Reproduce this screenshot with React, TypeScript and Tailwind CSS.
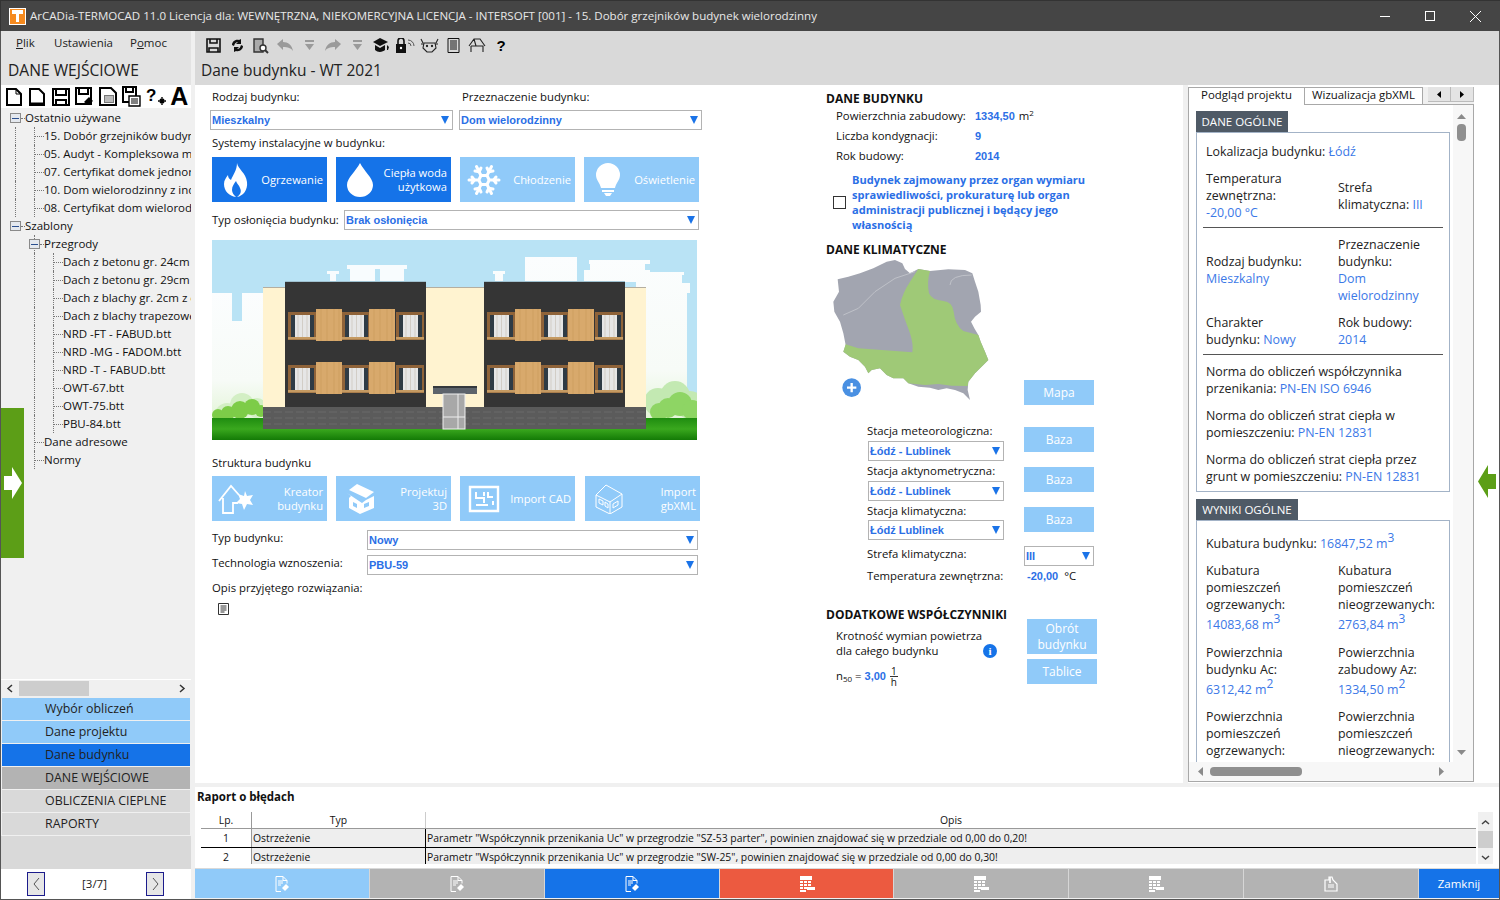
import type { ReactNode } from 'react'
import { Snowflake } from 'lucide-react'

const blue = 'text-[#2b6fe6]'

function Tri({ className = 'fill-[#1a73e8]' }: { className?: string }) {
  return (
    <svg width="8" height="8" viewBox="0 0 8 8" className={className}>
      <path d="M0 0h8L4 8z" />
    </svg>
  )
}

function Combo({ value, className }: { value: string; className: string }) {
  return (
    <div className={`h-5 shrink-0 border border-[#b3b3b3] bg-white flex items-center justify-between pl-px pr-[3px] ${className}`}>
      <span className={`text-[11px] font-bold font-['Liberation_Sans',sans-serif] ${blue}`}>{value}</span>
      <Tri />
    </div>
  )
}

function LightBtn({ children, className }: { children: ReactNode; className: string }) {
  return (
    <div className={`bg-[#90caf9] text-white text-[12px] leading-[16px] flex items-center justify-center text-center shrink-0 ${className}`}>
      {children}
    </div>
  )
}

function SystemBtn({ icon, label, on, w = 'w-[115px]' }: { icon: ReactNode; label: ReactNode; on?: boolean; w?: string }) {
  return (
    <div className={`h-[45px] ${w} shrink-0 flex items-center justify-between pl-[6px] pr-[4px] text-white text-[11.2px] leading-[14px] text-right ${on ? 'bg-[#1573e8]' : 'bg-[#90caf9]'}`}>
      <span className="w-[36px] h-[36px] flex items-center justify-center">{icon}</span>
      <span>{label}</span>
    </div>
  )
}

/* ---- toolbar drawings ---- */
const doc = 'fill-none stroke-black'

function LeftIcons() {
  const items = [
    <svg key="a" width="18" height="20" viewBox="0 0 18 20" className={doc} strokeWidth="2"><path d="M2 2h9l5 5v11H2z" /><path d="M11 2v5h5" strokeWidth="1" /></svg>,
    <svg key="b" width="18" height="20" viewBox="0 0 18 20" className={doc} strokeWidth="2"><path d="M2 2h9l5 5v11H2z" /><path d="M1 17h16" strokeWidth="3" /></svg>,
    <svg key="c" width="18" height="18" viewBox="0 0 18 18" className={doc} strokeWidth="2"><path d="M1 1h16v16H1z" /><path d="M4 1v6h10V1M4 17v-5h10v5" /></svg>,
    <svg key="d" width="19" height="19" viewBox="0 0 19 19" className={doc} strokeWidth="2"><path d="M1 1h15v16H1z" /><path d="M4 1v6h9V1" /><path d="M9 15l5-5 4 4-5 4z" fill="black" stroke="none" /></svg>,
    <svg key="e" width="19" height="19" viewBox="0 0 19 19"><path d="M1 1h11l5 5v12H1z" className={doc} strokeWidth="2" /><path d="M5 8h10v8H5z" fill="#777" /><path d="M6 10h8M6 12h8M6 14h8" stroke="#fff" /></svg>,
    <svg key="f" width="19" height="21" viewBox="0 0 19 21" className={doc} strokeWidth="2"><path d="M1 1h13v15H1z" /><path d="M4 1v5h7V1" /><path d="M7 10h11v10H7z" fill="#fff" strokeWidth="1.4" /><path d="M9 13h7M9 15h7M9 17h7" strokeWidth="1" /></svg>,
    <svg key="g" width="20" height="20" viewBox="0 0 20 20"><text x="0" y="14" fontSize="17" fontWeight="900" fontFamily="Liberation Sans">?</text><path d="M14 12l4 4M18 12l-4 4M16 10v8M12 14h8" stroke="#000" strokeWidth="1.4" /></svg>,
    <span key="h" className="text-[25px] leading-none font-bold font-['Liberation_Sans',sans-serif] text-black">A</span>,
  ]
  return (
    <div className="h-[23px] bg-white flex items-center pl-[1px]">
      {items.map((it, i) => (
        <span key={i} className="w-6 h-[23px] flex items-center justify-center">{it}</span>
      ))}
    </div>
  )
}

function MainIcons() {
  const gray = '#9a9a9a'
  const items = [
    <svg key="save" width="15" height="15" viewBox="0 0 15 15" fill="none" stroke="#111" strokeWidth="1.6"><path d="M1 1h13v13H1z" /><path d="M4 1v4h7V1M3 14v-4h9v4" /></svg>,
    <svg key="sync" width="15" height="15" viewBox="0 0 15 15" fill="#111"><path d="M2 7c0-3 3-6 7-5l2-1v5H6l2-2C6 4 5 5 4 8zM13 8c0 3-3 6-7 5l-2 1V9h5l-2 2c2 0 3-1 4-4z" /></svg>,
    <svg key="prev" width="16" height="16" viewBox="0 0 16 16" fill="none" stroke="#333" strokeWidth="1.4"><path d="M1 1h9v13H1z" fill="#aaa" /><circle cx="10" cy="10" r="3" fill="#fff" /><path d="M12 12l3 3" strokeWidth="2" /></svg>,
    <svg key="undo" width="16" height="13" viewBox="0 0 16 13" fill={gray}><path d="M0 5l6-5v3c5 0 9 3 10 9-2-3-5-4-10-4v3z" /></svg>,
    <svg key="d1" width="11" height="11" viewBox="0 0 11 11" fill={gray}><path d="M1 0h9v2H1zM1 4h9L5.5 10z" /></svg>,
    <svg key="redo" width="16" height="13" viewBox="0 0 16 13" fill={gray}><path d="M16 5l-6-5v3C5 3 1 6 0 12c2-3 5-4 10-4v3z" /></svg>,
    <svg key="d2" width="11" height="11" viewBox="0 0 11 11" fill={gray}><path d="M1 0h9v2H1zM1 4h9L5.5 10z" /></svg>,
    <svg key="hat" width="16" height="15" viewBox="0 0 16 15" fill="#111"><path d="M7 0l8 4-8 4-7-4zM2 7l5 3 5-3v5c-2 2-7 3-10 0zM14 7l2 2-1 3h-1z" /></svg>,
    <svg key="lock" width="20" height="15" viewBox="0 0 20 15"><path d="M1 6h10v9H1z" fill="#111" /><path d="M3 6V3a3 3 0 0 1 6 0v3" fill="none" stroke="#111" strokeWidth="1.6" /><path d="M13 5a3 3 0 0 1 3 3M13 2a6 6 0 0 1 6 6" fill="none" stroke="#555" /><circle cx="6" cy="10" r="1.2" fill="#fff" /></svg>,
    <svg key="cow" width="19" height="15" viewBox="0 0 19 15" fill="none" stroke="#222" strokeWidth="1.1"><path d="M4 5h11l1 5-4 4H7l-4-4zM3 5L1 1M16 5l2-4M4 6H1M15 6h3" /><circle cx="7" cy="8" r=".6" fill="#222" /><circle cx="12" cy="8" r=".6" fill="#222" /></svg>,
    <svg key="list" width="13" height="15" viewBox="0 0 13 15" fill="none" stroke="#111"><path d="M1 .5h11v14H1z" /><path d="M3 3h7M3 5h7M3 7h7M3 9h7M3 11h7" /></svg>,
    <svg key="house" width="18" height="15" viewBox="0 0 18 15" fill="none" stroke="#222" strokeWidth="1.1"><path d="M1 8l5-7h6l5 7M3 8h12v6M3 8v6M6 1l2 7" /></svg>,
    <span key="q" className="text-[15px] font-bold font-['Liberation_Sans',sans-serif] text-black leading-none">?</span>,
  ]
  return (
    <div className="h-[28px] flex items-center pl-[6px] pt-[1px]">
      {items.map((it, i) => (
        <span key={i} className="w-6 h-6 flex items-center justify-center">{it}</span>
      ))}
    </div>
  )
}

/* ---- tree ---- */
type TreeRow = { t: string; x: string; guides: number[]; stub?: number; box?: number }

const tree: TreeRow[] = [
  { t: 'Ostatnio używane', x: 'pl-[24px]', guides: [], box: 9 },
  { t: '15. Dobór grzejników budynek wielorodzinny', x: 'pl-[43px]', guides: [14, 33], stub: 33 },
  { t: '05. Audyt - Kompleksowa modernizacja', x: 'pl-[43px]', guides: [14, 33], stub: 33 },
  { t: '07. Certyfikat domek jednorodzinny', x: 'pl-[43px]', guides: [14, 33], stub: 33 },
  { t: '10. Dom wielorodzinny z indywidualnym', x: 'pl-[43px]', guides: [14, 33], stub: 33 },
  { t: '08. Certyfikat dom wielorodzinny', x: 'pl-[43px]', guides: [14, 33], stub: 33 },
  { t: 'Szablony', x: 'pl-[24px]', guides: [], box: 9 },
  { t: 'Przegrody', x: 'pl-[43px]', guides: [33], box: 28 },
  { t: 'Dach z betonu gr. 24cm', x: 'pl-[62px]', guides: [33, 52], stub: 52 },
  { t: 'Dach z betonu gr. 29cm', x: 'pl-[62px]', guides: [33, 52], stub: 52 },
  { t: 'Dach z blachy gr. 2cm z ociepleniem', x: 'pl-[62px]', guides: [33, 52], stub: 52 },
  { t: 'Dach z blachy trapezowej', x: 'pl-[62px]', guides: [33, 52], stub: 52 },
  { t: 'NRD -FT - FABUD.btt', x: 'pl-[62px]', guides: [33, 52], stub: 52 },
  { t: 'NRD -MG - FADOM.btt', x: 'pl-[62px]', guides: [33, 52], stub: 52 },
  { t: 'NRD -T - FABUD.btt', x: 'pl-[62px]', guides: [33, 52], stub: 52 },
  { t: 'OWT-67.btt', x: 'pl-[62px]', guides: [33, 52], stub: 52 },
  { t: 'OWT-75.btt', x: 'pl-[62px]', guides: [33, 52], stub: 52 },
  { t: 'PBU-84.btt', x: 'pl-[62px]', guides: [33, 52], stub: 52 },
  { t: 'Dane adresowe', x: 'pl-[43px]', guides: [33], stub: 33 },
  { t: 'Normy', x: 'pl-[43px]', guides: [33], stub: 33 },
]

function Tree() {
  return (
    <div className="flex-1 min-h-0 overflow-hidden bg-[#f0f0f0] pt-px relative">
      {tree.map((r, i) => (
        <div key={i} className={`relative h-[18px] leading-[18px] text-[11.5px] whitespace-nowrap text-[#111] ${r.x}`}>
          {r.guides.map((g) => (
            <span key={g} className="absolute top-0 h-full border-l border-dotted border-[#777]" style={{ left: g }} />
          ))}
          {r.stub !== undefined && (
            <span className="absolute top-[9px] w-[10px] border-t border-dotted border-[#777]" style={{ left: r.stub }} />
          )}
          {r.box !== undefined && (
            <>
              <span className="absolute top-[4px] w-[11px] h-[10px] border border-[#8a8a8a] bg-[#e4e8ee] flex items-center justify-center" style={{ left: r.box }}>
                <span className="w-[7px] h-px bg-[#2a4f8f]" />
              </span>
              <span className="absolute top-[9px] w-[4px] border-t border-dotted border-[#777]" style={{ left: r.box + 11 }} />
            </>
          )}
          {r.t}
        </div>
      ))}
      <div className="absolute left-0 top-[300px] w-[23px] h-[150px] bg-[#5c9e17] flex items-center pl-[2px]">
        <svg width="20" height="32" viewBox="0 0 20 32" fill="#fff"><path d="M1 9h8V0l10 16L9 32v-9H1z" /></svg>
      </div>
    </div>
  )
}

function NavItem({ label, bg }: { label: string; bg: string }) {
  return <div className={`h-[22px] mb-px mx-[1px] pl-[43px] text-[12.4px] leading-[22px] text-[#222] ${bg}`}>{label}</div>
}

function Pager({ dir }: { dir: 'l' | 'r' }) {
  return (
    <div className="w-[18px] h-6 border border-[#1c1c8c] bg-[#e6e6e6] flex items-center justify-center">
      <svg width="7" height="14" viewBox="0 0 7 14" fill="none" stroke="#555">
        <path d={dir === 'l' ? 'M6 1L1 7l5 6' : 'M1 1l5 6-5 6'} />
      </svg>
    </div>
  )
}

function LeftPanel() {
  return (
    <div className="w-[190px] shrink-0 flex flex-col">
      <div className="h-[54px] bg-[#e3e3e3] shrink-0">
        <div className="h-[21px] flex items-end pl-[15px] text-[11.5px] text-[#222] leading-[18px]">
          <span className="w-[38px]"><span className="underline">P</span>lik</span>
          <span className="w-[76px]">Ustawienia</span>
          <span>P<span className="underline">o</span>moc</span>
        </div>
        <div className="pl-[7px] mt-[7px] text-[15.6px] leading-[22px] text-[#222]">DANE WEJŚCIOWE</div>
      </div>
      <LeftIcons />
      <Tree />
      <div className="h-[18px] bg-[#f0f0f0] border-t border-white flex items-center pl-[5px] pr-[5px] shrink-0">
        <svg width="7" height="9" viewBox="0 0 7 9" fill="none" stroke="#333" strokeWidth="1.5"><path d="M6 1L2 4.5 6 8" /></svg>
        <div className="w-[70px] h-[15px] bg-[#cdcdcd] ml-[6px]" />
        <div className="flex-1" />
        <svg width="7" height="9" viewBox="0 0 7 9" fill="none" stroke="#333" strokeWidth="1.5"><path d="M1 1l4 3.5L1 8" /></svg>
      </div>
      <div className="bg-[#f0f0f0] pt-px shrink-0">
        <NavItem label="Wybór obliczeń" bg="bg-[#90caf9]" />
        <NavItem label="Dane projektu" bg="bg-[#90caf9]" />
        <NavItem label="Dane budynku" bg="bg-[#1573e8]" />
        <NavItem label="DANE WEJŚCIOWE" bg="bg-[#b3b3b3]" />
        <NavItem label="OBLICZENIA CIEPLNE" bg="bg-[#d9d9d9]" />
        <NavItem label="RAPORTY" bg="bg-[#d9d9d9]" />
      </div>
      <div className="h-[33px] bg-[#d9d9d9] shrink-0" />
      <div className="h-[30px] bg-white flex items-center pl-[26px] shrink-0">
        <Pager dir="l" />
        <span className="w-[101px] pr-[2px] text-center text-[11.5px] text-[#222]">[3/7]</span>
        <Pager dir="r" />
      </div>
    </div>
  )
}

/* ---- picture of the building ---- */
function Win({ x, y }: { x: number; y: number }) {
  return (
    <g>
      <rect x={x} y={y} width="28" height="28" fill="#8f6339" />
      <rect x={x + 3} y={y + 3} width="23" height="23" fill="#2f3b45" />
      <rect x={x + 7} y={y + 3} width="15" height="23" fill="#e6e6e6" />
      <path d={`M${x + 14.5} ${y + 3}v23M${x + 10} ${y + 3}v23M${x + 19} ${y + 3}v23`} stroke="#c9c2b8" strokeWidth="0.7" />
      <rect x={x} y={y + 25} width="28" height="2.500" fill="#c59a62" />
    </g>
  )
}

function Wood({ x, y }: { x: number; y: number }) {
  return (
    <g>
      <rect x={x} y={y} width="26" height="32" fill="#d8a96c" />
      <path d={`M${x + 5} ${y}v32M${x + 11} ${y}v32M${x + 18} ${y}v32M${x + 23} ${y}v32`} stroke="#cb9a5c" strokeWidth="0.6" />
    </g>
  )
}

function Bush({ fill, cs }: { fill: string; cs: number[][] }) {
  return (
    <g fill={fill}>
      {cs.map(([x, y, r], i) => <circle key={i} cx={x} cy={y} r={r} />)}
    </g>
  )
}

function Building() {
  const blocks = [0, 199]
  return (
    <svg width="485" height="200" viewBox="0 0 485 200" className="block">
      <defs>
        <linearGradient id="grass" x1="0" y1="0" x2="0" y2="1">
          <stop offset="0" stopColor="#1f8c10" />
          <stop offset="0.5" stopColor="#3aa81e" />
          <stop offset="1" stopColor="#137a06" />
        </linearGradient>
        <linearGradient id="haze" x1="0" y1="0" x2="0" y2="1">
          <stop offset="0" stopColor="#fbfdfe" />
          <stop offset="0.7" stopColor="#f7fbf7" />
          <stop offset="1" stopColor="#e4f5d8" />
        </linearGradient>
      </defs>
      <rect width="485" height="200" fill="#b9e3f5" />
      <path d="M0 53h20v28h10V53h22v125H0z" fill="url(#haze)" />
      <path d="M118 42v-8h-3v-3h12v3h-3v8zM138 42v-13h-3v-4h30v4h-2v13zM168 42v-13h-3v-4h30v4h-3v13z" fill="#f8fcfe" />
      <path d="M283 42v-8h-2v-3h12v3h-2v8zM313 42V17h52v25zM372 42V30h6v-6h-1v-4h61v4h-5v6h5v2h34v3h-2v8h8v10h-3v126h-51V42z" fill="url(#haze)" />
      <Bush fill="#c3e9b2" cs={[[446, 162, 14], [463, 156, 15], [478, 165, 14]]} />
      <Bush fill="#8ed564" cs={[[447, 172, 9], [456, 168, 10], [468, 164, 12], [480, 170, 10]]} />
      <Bush fill="#d3efc4" cs={[[15, 175, 12], [30, 165, 12], [45, 168, 10]]} />
      <Bush fill="#7dcc48" cs={[[6, 175, 6], [16, 173, 7], [28, 170, 9], [40, 167, 8], [49, 171, 6]]} />
      <rect y="178" width="485" height="22" fill="url(#grass)" />
      <rect x="51" y="48" width="383" height="119" fill="#fff3d0" />
      <rect x="51" y="47" width="383" height="1" fill="#b4aea0" />
      {blocks.map((o) => (
        <g key={o}>
          <rect x={73 + o} y="41" width="141" height="126" fill="#353535" />
          <rect x={73 + o} y="41" width="141" height="1" fill="#9fc1d0" />
          {[72, 125].map((y) => (
            <g key={y}>
              <Win x={76 + o} y={y} />
              <Win x={130 + o} y={y} />
              <Win x={184 + o} y={y} />
              <Wood x={104 + o} y={y - 3} />
              <Wood x={157 + o} y={y - 3} />
            </g>
          ))}
        </g>
      ))}
      <rect x="51" y="167" width="383" height="22" fill="#5b5b5b" />
      <path d="M51 172h383M51 178h383M51 184h383" stroke="#6a6a6a" strokeDasharray="8 3" />
      <rect x="221" y="146" width="44" height="8" fill="#5d636b" />
      <rect x="221" y="146" width="44" height="2" fill="#34383d" />
      <rect x="231" y="154" width="22" height="35" fill="#a8a8a8" stroke="#f0f0f0" />
      <path d="M246 154v35M231 177h22" stroke="#eee" />
    </svg>
  )
}

/* ---- middle column map ---- */
function PolandMap() {
  return (
    <svg width="170" height="147" viewBox="45 519 510 441" className="block ml-[4px] shrink-0">
      <path d="M68 583L100 575 135 565 175 550 215 530 240 525 262 535 270 552 285 565 310 552 345 558 400 553 450 555 472 565 480 590 490 620 497 660 498 680 480 695 468 710 478 730 490 750 497 770 510 800 520 825 505 840 480 865 460 890 458 915 465 945 445 925 420 915 395 910 370 915 345 908 310 905 280 895 265 880 235 880 215 870 195 850 170 855 160 865 150 845 130 825 105 815 85 800 92 780 85 745 75 710 58 680 55 650 72 620Z" fill="#a2a5b0" />
      <path d="M310 552L345 558Q335 590 342 625 350 645 385 648 412 650 416 680 420 720 445 738L490 750 497 770 510 800 520 825 505 840 480 865 460 890 458 903 410 902 370 897 330 900 280 895 265 880 235 880 215 870 195 850 170 855 160 865 150 845 130 825 105 815 85 800 92 778 130 790 200 795 292 802Q296 780 285 745 268 700 255 660 262 625 285 590Z" fill="#9fc977" />
      <path d="M85 690L130 670 180 620 240 580 300 560M405 600Q405 570 470 570" fill="none" stroke="#c4c6cc" strokeWidth="2.5" />
      <circle cx="110" cy="908" r="28" fill="#4a90e2" />
      <path d="M110 894v28M96 908h28" stroke="#fff" strokeWidth="7" />
    </svg>
  )
}

function Station({ label, value, mt, gap }: { label: string; value: string; mt: string; gap: string }) {
  return (
    <div className={`flex ${mt}`}>
      <div className="ml-[41px] w-[157px] shrink-0">
        <div className="h-4 leading-4">{label}</div>
        <Combo value={value} className={`ml-px w-[136px] ${gap}`} />
      </div>
      <LightBtn className="w-[70px] h-[25px] mt-[4px]">Baza</LightBtn>
    </div>
  )
}

function Pair({ a, b, center }: { a: ReactNode; b: ReactNode; center?: boolean }) {
  return (
    <div className={`grid grid-cols-[132px_1fr] ${center ? 'items-center' : ''}`}>
      <div>{a}</div>
      <div>{b}</div>
    </div>
  )
}

const V = ({ children }: { children: ReactNode }) => <span className="text-[#3b78e7]">{children}</span>
const Up = ({ children }: { children: ReactNode }) => <sup className="text-[12px]">{children}</sup>

function TabPanel() {
  return (
    <div className="w-[286px] shrink-0 bg-white flex flex-col pt-[2px]">
      <div className="h-[17px] flex items-start text-[11.4px] relative shrink-0 bg-[#f0f0f0]">
        <div className="w-[117px] h-[18px] border-l border-t border-r border-[#a8a8a8] bg-white text-center leading-[14px] relative z-10">Podgląd projektu</div>
        <div className="w-[118px] h-[17px] border-t border-r border-[#a8a8a8] bg-white text-center leading-[14px] whitespace-nowrap">Wizualizacja gbXML</div>
        <div className="ml-[5px] w-[46px] h-[15px] bg-[#e4e4e4] border-r border-b border-[#bbb] flex text-black">
          <span className="flex-1 flex items-center justify-center border-r border-[#bbb]"><svg width="4" height="7" viewBox="0 0 4 7"><path d="M4 0v7L0 3.5z" /></svg></span>
          <span className="flex-1 flex items-center justify-center"><svg width="4" height="7" viewBox="0 0 4 7"><path d="M0 0v7l4-3.5z" /></svg></span>
        </div>
      </div>
      <div className="h-[678px] border border-[#a8a8a8] flex flex-col overflow-hidden">
        <div className="flex-1 min-h-0 flex">
          <div className="w-[264px] pl-[7px] pt-[6px] overflow-hidden text-[12.4px] leading-[17px] text-[#222] shrink-0">
            <div className="w-[92px] h-[21px] bg-[#4f5a66] text-white text-center leading-[21px] text-[11.5px]">DANE OGÓLNE</div>
            <div className="w-[254px] border border-[#a3b3c7] pl-[9px] pr-[5px] pt-[10px] pb-[6px]">
              <div>Lokalizacja budynku: <V>Łódź</V></div>
              <div className="mt-[10px]">
                <Pair center a={<>Temperatura<br />zewnętrzna:<br /><V>-20,00 °C</V></>} b={<>Strefa<br />klimatyczna: <V>III</V></>} />
              </div>
              <div className="h-px bg-[#555] -ml-[3px] mr-px mt-[6px]" />
              <div className="mt-[8px]">
                <Pair center a={<>Rodzaj budynku:<br /><V>Mieszkalny</V></>} b={<>Przeznaczenie<br />budynku:<br /><V>Dom<br />wielorodzinny</V></>} />
              </div>
              <div className="mt-[10px]">
                <Pair a={<>Charakter<br />budynku: <V>Nowy</V></>} b={<>Rok budowy:<br /><V>2014</V></>} />
              </div>
              <div className="h-px bg-[#555] -ml-[3px] mr-px mt-[6px]" />
              <div className="mt-[8px]">Norma do obliczeń współczynnika<br />przenikania: <V>PN-EN ISO 6946</V></div>
              <div className="mt-[10px]">Norma do obliczeń strat ciepła w<br />pomieszczeniu: <V>PN-EN 12831</V></div>
              <div className="mt-[10px]">Norma do obliczeń strat ciepła przez<br />grunt w pomieszczeniu: <V>PN-EN 12831</V></div>
            </div>
            <div className="w-[102px] h-[21px] mt-[7px] bg-[#4f5a66] text-white text-center leading-[21px] text-[11.5px]">WYNIKI OGÓLNE</div>
            <div className="w-[254px] border border-[#a3b3c7] pl-[9px] pr-[5px] pt-[14px] pb-[7px]">
              <div>Kubatura budynku: <V>16847,52 m<Up>3</Up></V></div>
              <div className="mt-[10px]">
                <Pair a={<>Kubatura<br />pomieszczeń<br />ogrzewanych:<div className="mt-[3px]"><V>14083,68 m<Up>3</Up></V></div></>} b={<>Kubatura<br />pomieszczeń<br />nieogrzewanych:<div className="mt-[3px]"><V>2763,84 m<Up>3</Up></V></div></>} />
              </div>
              <div className="mt-[11px]">
                <Pair a={<>Powierzchnia<br />budynku Ac:<div className="mt-[3px]"><V>6312,42 m<Up>2</Up></V></div></>} b={<>Powierzchnia<br />zabudowy Az:<div className="mt-[3px]"><V>1334,50 m<Up>2</Up></V></div></>} />
              </div>
              <div className="mt-[10px]">
                <Pair a={<>Powierzchnia<br />pomieszczeń<br />ogrzewanych:</>} b={<>Powierzchnia<br />pomieszczeń<br />nieogrzewanych:</>} />
              </div>
            </div>
          </div>
          <div className="flex-1 bg-[#f7f7f7] flex flex-col items-center pt-[9px] pb-[7px] pr-[4px]">
            <svg width="9" height="5" viewBox="0 0 9 5" fill="#8a8a8a"><path d="M0 5h9L4.500 0z" /></svg>
            <div className="w-[9px] h-[17px] rounded-[4px] bg-[#8f8f8f] mt-[5px]" />
            <div className="flex-1" />
            <svg width="9" height="5" viewBox="0 0 9 5" fill="#8a8a8a"><path d="M0 0h9L4.500 5z" /></svg>
          </div>
        </div>
        <div className="h-[19px] bg-[#f7f7f7] flex items-center pl-[9px] pr-[29px] shrink-0">
          <svg width="5" height="9" viewBox="0 0 5 9" fill="#8a8a8a"><path d="M5 0v9L0 4.500z" /></svg>
          <div className="w-[92px] h-[9px] rounded-[4px] bg-[#8f8f8f] ml-[7px]" />
          <div className="flex-1" />
          <svg width="5" height="9" viewBox="0 0 5 9" fill="#8a8a8a"><path d="M0 0v9l5-4.500z" /></svg>
        </div>
      </div>
    </div>
  )
}

/* ---- bottom bar icons ---- */
const EditDoc = () => (
  <svg width="14" height="16" viewBox="0 0 14 16" fill="none" stroke="#fff"><path d="M1 .5h7l4 4v3M1 .5v15h5" /><path d="M3 5h5M3 7h5M3 9h3" /><path d="M7 12l4-4 3 3-4 4z" fill="#fff" stroke="none" /><path d="M8 .5v4h4" /></svg>
)
const CalcDoc = () => (
  <svg width="16" height="16" viewBox="0 0 16 16" fill="#fff"><path d="M1 0h12v4H1zM1 5h3v2H1zM5 5h3v2H5zM9 5h3v2H9zM1 8h3v2H1zM5 8h3v2H5zM9 8h3v2H9zM1 11h3v2H1zM5 11h3v2H5zM8 11h8v3H8zM1 14h6v2H1z" /></svg>
)
const ClipDoc = () => (
  <svg width="14" height="16" viewBox="0 0 14 16" fill="none" stroke="#fff" strokeWidth="1.2"><path d="M1 4h4v-3h3l1 3 4 4v7H1z" /><path d="M4 9h6M4 11h6" /><path d="M6 1v6" strokeWidth="1.6" /></svg>
)

function BottomBar() {
  const btns: [string, ReactNode][] = [
    ['bg-[#90caf9]', <EditDoc key="a" />],
    ['bg-[#b3b3b3]', <EditDoc key="b" />],
    ['bg-[#1573e8]', <EditDoc key="c" />],
    ['bg-[#ec5a40]', <CalcDoc key="d" />],
    ['bg-[#b3b3b3]', <CalcDoc key="e" />],
    ['bg-[#b3b3b3]', <CalcDoc key="f" />],
    ['bg-[#b3b3b3]', <ClipDoc key="g" />],
  ]
  return (
    <div className="h-[30px] flex shrink-0 border-t border-[#d9d9d9]">
      <div className="flex-1 flex">
        {btns.map(([bg, icon], i) => (
          <div key={i} className={`flex-1 flex items-center justify-center border-r border-[#d6d6d6] ${bg}`}>{icon}</div>
        ))}
      </div>
      <div className="w-[80px] bg-[#1573e8] text-white text-[11.5px] flex items-center justify-center">Zamknij</div>
    </div>
  )
}

function ErrorTable() {
  const rows = [
    ['1', 'Parametr "Współczynnik przenikania Uc" w przegrodzie "SZ-53 parter", powinien znajdować się w przedziale od 0,00 do 0,20!'],
    ['2', 'Parametr "Współczynnik przenikania Uc" w przegrodzie "SW-25", powinien znajdować się w przedziale od 0,00 do 0,30!'],
  ]
  return (
    <div className="h-[81px] bg-white shrink-0 overflow-hidden">
      <div className="pl-[2px] h-[20px] leading-[20px] text-[11.5px] font-bold text-[#111]">Raport o błędach</div>
      <div className="ml-[6px] mt-[5px] flex h-[52px]">
        <div className="w-[1275px] shrink-0 overflow-hidden text-[10.4px] text-[#111]">
          <div className="flex h-[17px] leading-[16px] border-b border-[#999] text-center">
            <div className="w-[51px] border-r border-[#999]">Lp.</div>
            <div className="w-[174px] border-r border-[#ccc]">Typ</div>
            <div className="flex-1">Opis</div>
          </div>
          {rows.map(([n, text]) => (
            <div key={n} className="flex h-[19px] leading-[19px] border-b-[1.5px] border-black whitespace-nowrap">
              <div className="w-[51px] border-r border-[#999] text-center bg-white">{n}</div>
              <div className="w-[174px] border-r border-black bg-[#eeeeee] pl-[1px]">Ostrzeżenie</div>
              <div className="flex-1 bg-[#eeeeee] pl-[1px]">{text}</div>
            </div>
          ))}
        </div>
        <div className="w-[15px] ml-[2px] bg-[#f0f0f0] flex flex-col items-center">
          <svg width="9" height="6" viewBox="0 0 9 6" fill="none" stroke="#444" strokeWidth="1.5" className="mt-[7px]"><path d="M1 5l3.500-3L8 5" /></svg>
          <div className="w-full h-[17px] bg-[#cdcdcd] mt-[6px]" />
          <div className="flex-1" />
          <svg width="9" height="6" viewBox="0 0 9 6" fill="none" stroke="#444" strokeWidth="1.5" className="mb-[3px]"><path d="M1 1l3.500 3L8 1" /></svg>
        </div>
      </div>
    </div>
  )
}

export default function App() {
  const sysIconClass = 'fill-white'
  const valueClass = `font-bold text-[11px] font-['Liberation_Sans',sans-serif] ${blue}`
  return (
    <div className="w-[1500px] h-[900px] overflow-hidden flex flex-col bg-[#f0f0f0] font-['Open_Sans',sans-serif] text-[#111] text-[11.35px]">
      {/* title bar */}
      <div className="h-[31px] shrink-0 bg-[#454545] border-t border-l border-[#333] flex items-center pl-[8px] text-[#e8e8e8] text-[11.56px]">
        <span className="w-[17px] h-[17px] bg-[#f58a1f] border border-white flex items-center justify-center">
          <svg width="11" height="12" viewBox="0 0 11 12" fill="#fff"><path d="M0 0h11v4H7v8H4V4H0z" /></svg>
        </span>
        <span className="ml-[4px]">ArCADia-TERMOCAD 11.0 Licencja dla: WEWNĘTRZNA, NIEKOMERCYJNA LICENCJA - INTERSOFT [001] - 15. Dobór grzejników budynek wielorodzinny</span>
        <div className="flex-1" />
        <div className="w-[10px] h-px bg-white mr-[35px]" />
        <div className="w-[10px] h-[10px] border border-white mr-[35px]" />
        <svg width="11" height="11" viewBox="0 0 11 11" stroke="#fff" className="mr-[19px]"><path d="M0 0l11 11M11 0L0 11" /></svg>
      </div>

      {/* body */}
      <div className="flex-1 min-h-0 flex border-l border-r border-b border-[#555]">
        <LeftPanel />
        <div className="w-[4px] shrink-0 bg-[#f0f0f0]" />
        <div className="flex-1 min-w-0 flex flex-col">
          <div className="h-[54px] bg-[#d9d9d9] shrink-0 pl-[0px]">
            <MainIcons />
            <div className="pl-[6px] text-[15.5px] leading-[22px] text-[#222]">Dane budynku - WT 2021</div>
          </div>

          <div className="h-[698px] flex shrink-0 bg-white overflow-hidden">
            {/* form column */}
            <div className="w-[631px] shrink-0 pl-[17px]">
              <div className="h-[25px] pt-[4px] flex leading-4">
                <span className="w-[250px]">Rodzaj budynku:</span>
                <span>Przeznaczenie budynku:</span>
              </div>
              <div className="flex -ml-[2px]">
                <Combo value="Mieszkalny" className="w-[243px]" />
                <Combo value="Dom wielorodzinny" className="w-[243px] ml-[6px]" />
              </div>
              <div className="mt-[5px] h-4 leading-4">Systemy instalacyjne w budynku:</div>
              <div className="mt-[6px] flex gap-[9px]">
                <SystemBtn on label="Ogrzewanie" icon={
                  <svg width="28" height="34" viewBox="0 0 28 34" className={sysIconClass}>
                    <path d="M15 0c1 6 9 10 10 19 1 8-4 14-10 15 3-2 5-5 3-9-1-3-3-4-4-7-2 3-4 5-4 9 0 3 2 5 4 7C7 33 2 28 2 21c0-4 2-6 4-9 0 2 1 4 3 5 2-5 6-10 6-17z" />
                  </svg>
                } />
                <SystemBtn on label={<>Ciepła woda<br />użytkowa</>} icon={
                  <svg width="26" height="34" viewBox="0 0 26 34" className={sysIconClass}><path d="M13 0c4 8 13 15 13 22a13 12 0 0 1-26 0C0 15 9 8 13 0z" /></svg>
                } />
                <SystemBtn label="Chłodzenie" icon={<Snowflake size={36} color="#fff" strokeWidth={2} />} />
                <SystemBtn label="Oświetlenie" icon={
                  <svg width="26" height="34" viewBox="0 0 26 34" className={sysIconClass}><path d="M13 0a12 12 0 0 1 12 12c0 5-4 8-5 13H6c-1-5-5-8-5-13A12 12 0 0 1 13 0zM7 27h12v2H7zM9 30h8l-2 3h-4z" /></svg>
                } />
              </div>
              <div className="mt-[8px] flex h-5 items-center">
                <span className="w-[132px] shrink-0">Typ osłonięcia budynku:</span>
                <Combo value="Brak osłonięcia" className="w-[355px]" />
              </div>
              <div className="mt-[10px]"><Building /></div>
              <div className="mt-[15px] h-4 leading-4">Struktura budynku</div>
              <div className="mt-[5px] flex gap-[9px]">
                <SystemBtn label={<>Kreator<br />budynku</>} icon={
                  <svg width="36" height="30" viewBox="0 0 36 30" fill="none" stroke="#fff" strokeWidth="1.8"><path d="M1 17L13 2l8 9M5 14v15h10V19h5" /><path d="M27 7l2 5 6-1-3 5 3 5-6-1-3 6-2-6-6-1 4-4-2-5 6 2z" fill="#fff" stroke="none" /></svg>
                } />
                <SystemBtn label={<>Projektuj<br />3D</>} icon={
                  <svg width="30" height="30" viewBox="0 0 30 30" fill="#fff"><path d="M12 0l17 8-8 6L4 6z" /><path d="M2 9l4 3-2 2v10l11 6 14-6V12l-8 4-4 3zM8 18l4 2v4l-4-2zM19 20l5-2v4l-5 2z" /></svg>
                } />
                <SystemBtn label="Import CAD" icon={
                  <svg width="32" height="28" viewBox="0 0 32 28" fill="none" stroke="#fff" strokeWidth="2.4"><path d="M2 2h28v24H2z" /><path d="M8 7v6h8v5M8 20h12M20 7v5h5M16 7v4M25 16v4" strokeWidth="2" /></svg>
                } />
                <SystemBtn w="w-[115px] ml-px" label={<>Import<br />gbXML</>} icon={
                  <svg width="30" height="30" viewBox="0 0 30 30" fill="none" stroke="#fff" strokeWidth="1"><path d="M2 11L12 1l16 9-12 8zM2 11v12l14 7V18M16 30l12-7V10M5 15l4 2v4l-4-2zM11 18l3 2v4l-3-2zM19 20l5-3v4l-5 3z" /></svg>
                } />
              </div>
              <div className="mt-[9px] flex">
                <span className="w-[155px] shrink-0 leading-4">Typ budynku:</span>
                <Combo value="Nowy" className="w-[331px]" />
              </div>
              <div className="mt-[5px] flex">
                <span className="w-[155px] shrink-0 leading-4">Technologia wznoszenia:</span>
                <Combo value="PBU-59" className="w-[331px]" />
              </div>
              <div className="mt-[5px] h-4 leading-4">Opis przyjętego rozwiązania:</div>
              <svg width="11" height="12" viewBox="0 0 11 12" fill="none" stroke="#333" className="mt-[7px] ml-[6px]"><path d="M.5.500h10v11H.5z" /><path d="M2.500 3h6M2.500 5h6M2.500 7h6M2.500 9h4" /></svg>
            </div>

            {/* data column */}
            <div className="w-[357px] shrink-0">
              <div className="mt-[6px] h-4 leading-4 font-bold text-[12px]">DANE BUDYNKU</div>
              <div className="-mt-px">
                {[
                  ['Powierzchnia zabudowy:', <><span className={valueClass}>1334,50</span><span className="ml-[4px]">m<sup className="text-[8px]">2</sup></span></>],
                  ['Liczba kondygnacji:', <span key="k" className={valueClass}>9</span>],
                  ['Rok budowy:', <span key="r" className={valueClass}>2014</span>],
                ].map(([l, v], i) => (
                  <div key={i} className="flex h-5 ml-[10px] items-center">
                    <span className="w-[139px] shrink-0">{l}</span>
                    <span>{v}</span>
                  </div>
                ))}
              </div>
              <div className="mt-[6px] flex items-center ml-[7px]">
                <span className="w-[13px] h-[13px] border border-[#333] shrink-0" />
                <span className={`ml-[6px] w-[250px] font-bold text-[11.05px] leading-[15px] ${blue}`}>
                  Budynek zajmowany przez organ wymiaru<br />sprawiedliwości, prokuraturę lub organ<br />administracji publicznej i będący jego<br />własnością
                </span>
              </div>
              <div className="mt-[10px] h-4 leading-4 font-bold text-[12px]">DANE KLIMATYCZNE</div>
              <div className="flex h-[147px]">
                <PolandMap />
                <LightBtn className="w-[70px] h-[25px] ml-[24px] self-end">Mapa</LightBtn>
              </div>
              <Station label="Stacja meteorologiczna:" value="Łódź - Lublinek" mt="mt-[18px]" gap="mt-[2px]" />
              <Station label="Stacja aktynometryczna:" value="Łódź - Lublinek" mt="mt-[2px]" gap="mt-[2px]" />
              <Station label="Stacja klimatyczna:" value="Łódź Lublinek" mt="mt-[2px]" gap="mt-[1px]" />
              <div className="flex mt-[6px]">
                <span className="ml-[41px] w-[157px] leading-4 shrink-0">Strefa klimatyczna:</span>
                <Combo value="III" className="w-[70px]" />
              </div>
              <div className="flex mt-[2px] h-4 leading-4">
                <span className="ml-[41px] w-[160px] shrink-0">Temperatura zewnętrzna:</span>
                <span className={valueClass}>-20,00</span>
                <span className="ml-[6px]">°C</span>
              </div>
              <div className="mt-[23px] h-4 leading-4 font-bold text-[12px]">DODATKOWE WSPÓŁCZYNNIKI</div>
              <div className="flex -mt-[4px]">
                <div className="ml-[10px] w-[191px] shrink-0 pt-[9px]">
                  <div className="flex">
                    <div className="w-[147px] leading-[15px] whitespace-nowrap">Krotność wymian powietrza<br />dla całego budynku</div>
                    <span className="self-end w-[14px] h-[14px] rounded-full bg-[#1573e8] text-white text-[11px] font-bold leading-[14px] text-center font-['Liberation_Serif',serif]">i</span>
                  </div>
                  <div className="mt-[8px] h-5 flex items-center">
                    <span>n<sub className="text-[8px]">50</sub> =</span>
                    <span className={`ml-[3px] ${valueClass}`}>3,00</span>
                    <span className="ml-[4px] inline-flex flex-col items-center text-[10px] leading-[10px]">
                      <span className="border-b border-[#333] px-px">1</span>
                      <span>h</span>
                    </span>
                  </div>
                </div>
                <div className="w-[70px]">
                  <LightBtn className="w-[70px] h-[35px]">Obrót<br />budynku</LightBtn>
                  <LightBtn className="w-[70px] h-[25px] mt-[5px]">Tablice</LightBtn>
                </div>
              </div>
            </div>

            {/* side panel */}
            <div className="flex-1 flex min-w-0 bg-[#f0f0f0]">
              <div className="w-[5px] shrink-0" />
              <TabPanel />
              <div className="flex-1 bg-white pt-[380px] pl-[4px]">
                <svg width="18" height="33" viewBox="0 0 18 33" fill="#5c9e17"><path d="M18 9h-8V0L0 16.500 10 33v-9h8z" /></svg>
              </div>
            </div>
          </div>

          <div className="h-[4px] shrink-0 bg-[#f0f0f0]" />
          <ErrorTable />
          <BottomBar />
        </div>
      </div>
    </div>
  )
}
